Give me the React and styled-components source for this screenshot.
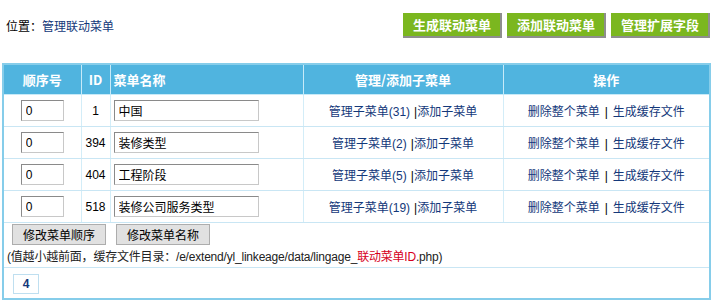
import React from "react";
import styled, { createGlobalStyle } from "styled-components";

const GlobalStyle = createGlobalStyle`
  body {
    margin: 0;
    background: #ffffff;
    font-family: Tahoma, "Liberation Sans", "Noto Sans CJK SC", sans-serif;
    font-size: 12px;
    color: #000000;
  }
`;

const Page = styled.div`
  width: 715px;
  padding: 0 4px 0 2px;
  box-sizing: border-box;
`;

const TopBar = styled.div`
  display: flex;
  justify-content: space-between;
  align-items: center;
  padding-top: 13px;
  margin-bottom: 25px;
  height: 25px;
`;

const Location = styled.div`
  padding-left: 4px;
  font-size: 12px;
  a {
    color: #13387a;
    text-decoration: none;
  }
`;

const Actions = styled.div`
  display: flex;
  gap: 5px;
  padding-right: 1px;
`;

const GreenButton = styled.button`
  height: 25px;
  padding: 0 9px 0 10px;
  background: #7bb71f;
  border: none;
  border-right: 2px solid #8e8e8e;
  border-bottom: 2px solid #8e8e8e;
  color: #ffffff;
  font-family: "Noto Sans CJK SC", sans-serif;
  font-weight: bold;
  font-size: 13px;
  cursor: pointer;
`;

const Table = styled.table`
  width: 709px;
  border-collapse: collapse;
  border: 2px solid #86cdea;
  table-layout: fixed;
`;

const HeadCell = styled.th`
  height: 29px;
  padding: 0 3px;
  background: #50b4df;
  color: #ffffff;
  font-family: "Noto Sans CJK SC", sans-serif;
  font-weight: bold;
  font-size: 13px;
  text-align: ${(p) => p.$align || "center"};
  border-left: 1px solid #c7eaf8;
  border-bottom: 1px solid #c7eaf8;
  &:first-child {
    border-left: none;
  }
`;

const Cell = styled.td`
  height: 31px;
  padding: 0 3px;
  text-align: ${(p) => p.$align || "center"};
  border-left: 1px solid #d3edf8;
  border-bottom: 1px solid #c9e6f4;
  &:first-child {
    border-left: none;
  }
`;

const FootCell = styled.td`
  padding: ${(p) => p.$pad || "1px 3px 3px"};
  border-bottom: 1px solid #c9e6f4;
  text-align: left;
`;

const Field = styled.input`
  box-sizing: border-box;
  width: ${(p) => p.$w}px;
  height: 21px;
  padding: 1px 4px;
  border: 1px solid #8a8a8a;
  border-right-color: #c8c8c8;
  border-bottom-color: #c8c8c8;
  font-family: Tahoma, "Liberation Sans", "Noto Sans CJK SC", sans-serif;
  font-size: 12px;
  color: #000000;
  background: #ffffff;
  vertical-align: middle;
`;

const Link = styled.a`
  color: #13387a;
  text-decoration: none;
`;

const Sep = styled.span`
  color: #000000;
  margin: ${(p) => p.$m || "0"};
`;

const FootButtons = styled.div`
  display: flex;
  gap: 10px;
  padding-left: 5px;
  margin-bottom: 2px;
`;

const GrayButton = styled.button`
  width: 94px;
  height: 21px;
  padding: 0;
  background: #e1e1e1;
  border: 1px solid #adadad;
  font-family: "Noto Sans CJK SC", sans-serif;
  font-size: 12px;
  color: #000000;
`;

const Note = styled.div`
  font-size: 12px;
  letter-spacing: -0.2px;
  color: #222222;
  span {
    color: #d6001c;
  }
`;

const PageBox = styled.span`
  display: inline-block;
  width: 24px;
  height: 18px;
  margin-left: 6px;
  border: 1px solid #bfdff0;
  text-align: center;
  line-height: 18px;
  font-family: Tahoma, "Liberation Sans", sans-serif;
  font-weight: bold;
  font-size: 12px;
  color: #13387a;
`;

const rows = [
  { id: 1, name: "中国", count: 31 },
  { id: 394, name: "装修类型", count: 2 },
  { id: 404, name: "工程阶段", count: 5 },
  { id: 518, name: "装修公司服务类型", count: 19 },
];

export default function App() {
  return (
    <Page>
      <GlobalStyle />
      <TopBar>
        <Location>
          位置：<a href="#">管理联动菜单</a>
        </Location>
        <Actions>
          <GreenButton>生成联动菜单</GreenButton>
          <GreenButton>添加联动菜单</GreenButton>
          <GreenButton>管理扩展字段</GreenButton>
        </Actions>
      </TopBar>

      <Table>
        <colgroup>
          <col style={{ width: 78 }} />
          <col style={{ width: 29 }} />
          <col style={{ width: 193 }} />
          <col style={{ width: 200 }} />
          <col />
        </colgroup>
        <thead>
          <tr>
            <HeadCell>顺序号</HeadCell>
            <HeadCell>ID</HeadCell>
            <HeadCell $align="left">菜单名称</HeadCell>
            <HeadCell>管理/添加子菜单</HeadCell>
            <HeadCell>操作</HeadCell>
          </tr>
        </thead>
        <tbody>
          {rows.map((r) => (
            <tr key={r.id}>
              <Cell>
                <Field $w={43} defaultValue="0" />
              </Cell>
              <Cell>{r.id}</Cell>
              <Cell $align="left">
                <Field $w={145} defaultValue={r.name} />
              </Cell>
              <Cell>
                <Link href="#">管理子菜单({r.count})</Link>
                <Sep $m="0 0 0 4px">|</Sep>
                <Link href="#">添加子菜单</Link>
              </Cell>
              <Cell>
                <Link href="#">删除整个菜单</Link>
                <Sep $m="0 5px">|</Sep>
                <Link href="#">生成缓存文件</Link>
              </Cell>
            </tr>
          ))}
          <tr>
            <FootCell colSpan={5}>
              <FootButtons>
                <GrayButton>修改菜单顺序</GrayButton>
                <GrayButton>修改菜单名称</GrayButton>
              </FootButtons>
              <Note>
                (值越小越前面，缓存文件目录：/e/extend/yl_linkeage/data/lingage_
                <span>联动菜单ID</span>.php)
              </Note>
            </FootCell>
          </tr>
          <tr>
            <FootCell colSpan={5} $pad="6px 3px 4px">
              <PageBox>4</PageBox>
            </FootCell>
          </tr>
        </tbody>
      </Table>
    </Page>
  );
}
